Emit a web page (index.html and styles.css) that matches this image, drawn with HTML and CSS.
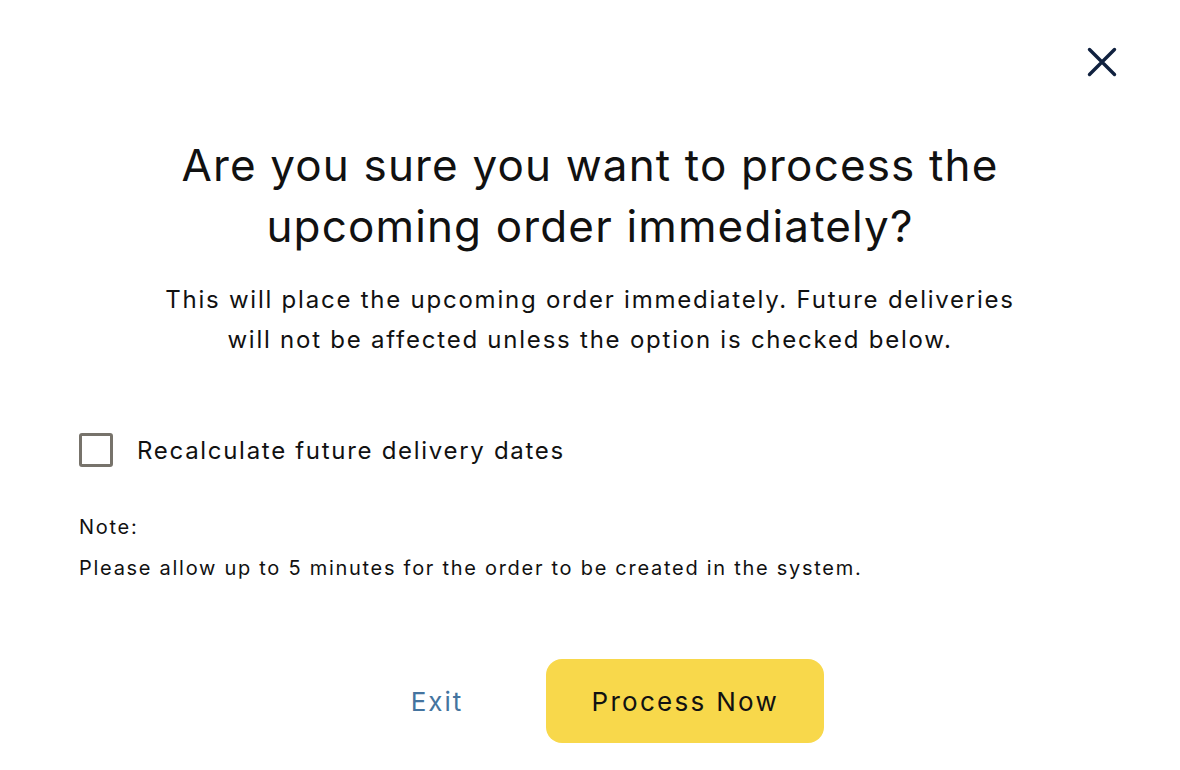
FILE: index.html
```html
<!DOCTYPE html>
<html lang="en">
<head>
<meta charset="utf-8">
<title>Process order</title>
<link rel="stylesheet" href="styles.css">
</head>
<body>
<div class="modal">
  <div class="modal-top">
    <button class="close" aria-label="Close">
      <svg width="30" height="30" viewBox="0 0 30 30"><path d="M2.5 2.5 L27.5 27.5 M27.5 2.5 L2.5 27.5" stroke="#10213f" stroke-width="3.4" stroke-linecap="round" fill="none"/></svg>
    </button>
  </div>
  <h1 class="title">Are you sure you want to process the<br>upcoming order immediately?</h1>
  <p class="lead">This will place the upcoming order immediately. Future deliveries<br>will not be affected unless the option is checked below.</p>
  <label class="check">
    <span class="box"></span>
    <span class="check-label">Recalculate future delivery dates</span>
  </label>
  <div class="note">
    <p>Note:</p>
    <p>Please allow up to 5 minutes for the order to be created in the system.</p>
  </div>
  <div class="actions">
    <button class="exit">Exit</button>
    <button class="primary">Process Now</button>
  </div>
</div>
</body>
</html>
```
FILE: styles.css
```css
html, body {
  margin: 0;
  padding: 0;
  background: #ffffff;
}
body {
  font-family: Inter, "Noto Sans", sans-serif;
  color: #111111;
}
.modal {
  width: 1180px;
  height: 770px;
  box-sizing: border-box;
  padding: 0 79px;
  display: flex;
  flex-direction: column;
}
.modal-top {
  display: flex;
  justify-content: flex-end;
  padding-top: 47px;
  margin-right: -16px;
  height: 30px;
}
.close {
  background: none;
  border: 0;
  padding: 0;
  width: 30px;
  height: 30px;
  cursor: pointer;
}
.close svg {
  display: block;
}
.title {
  margin: 58px 0 0;
  text-align: center;
  font-weight: 400;
  font-size: 44px;
  line-height: 61px;
  letter-spacing: 1.15px;
}
.lead {
  margin: 23px 0 0;
  text-align: center;
  font-size: 24px;
  line-height: 40px;
  letter-spacing: 1.77px;
}
.check {
  display: flex;
  align-items: center;
  gap: 24px;
  margin-top: 73px;
}
.box {
  width: 28px;
  height: 28px;
  border: 3px solid #77736b;
  border-radius: 3px;
}
.check-label {
  font-size: 24px;
  letter-spacing: 1.7px;
}
.note {
  margin-top: 40px;
  font-size: 20px;
  line-height: 41px;
  letter-spacing: 1.72px;
}
.note p {
  margin: 0;
}
.actions {
  display: flex;
  justify-content: center;
  align-items: center;
  gap: 83px;
  margin-top: 70px;
  padding-left: 55px;
}
.exit {
  background: none;
  border: 0;
  padding: 0;
  font-family: inherit;
  font-size: 26px;
  letter-spacing: 2px;
  color: #44749f;
}
.primary {
  width: 278px;
  height: 84px;
  border: 0;
  border-radius: 16px;
  background: #f8d84b;
  font-family: inherit;
  font-size: 26px;
  color: #111111;
  letter-spacing: 2.3px;
}
```
